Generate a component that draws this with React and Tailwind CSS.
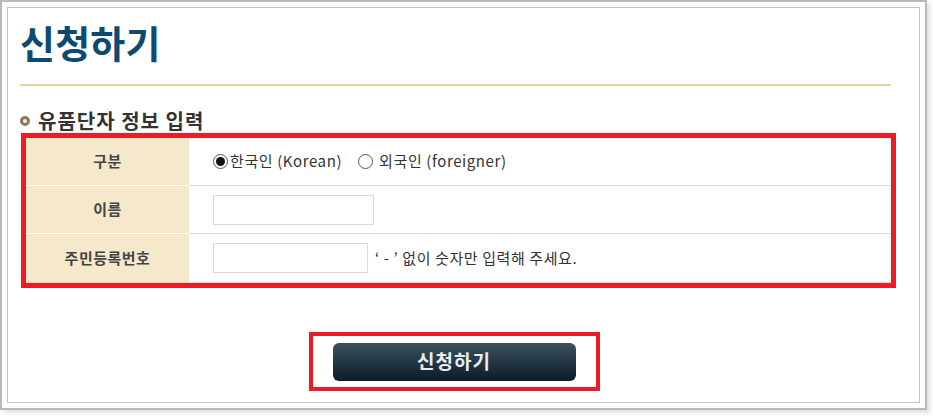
import React from "react";

const font = { fontFamily: '"Noto Sans CJK KR", "Noto Sans", sans-serif' };

function Radio({ checked }) {
  return (
    <span className="inline-flex items-center justify-center w-[15px] h-[15px] rounded-full border border-[#555] bg-white mr-[2px]">
      {checked && <span className="block w-[9px] h-[9px] rounded-full bg-[#111]" />}
    </span>
  );
}

function Row({ label, children, last }) {
  return (
    <div className={`flex h-[48px] ${last ? "" : "border-b border-[#dcdcdc]"}`}>
      <div className={`w-[163px] flex items-center justify-center bg-[#f6e8cb] text-[15px] font-bold text-[#444] tracking-[0.5px] ${last ? "" : "border-b border-white -mb-px"}`}>
        {label}
      </div>
      <div className="flex-1 flex items-center pl-[24px] text-[15px] text-[#333] tracking-[0.6px]">{children}</div>
    </div>
  );
}

export default function App() {
  return (
    <div className="w-[933px] h-[416px] bg-white" style={font}>
      <div className="w-[927px] h-[410px] border-2 border-[#b9b9b9] p-[5px] shadow-[3px_3px_4px_rgba(0,0,0,0.12)]">
        <div className="h-full border border-[#c4c4c4] pl-[12px] pt-[10px]">
          <h1 className="text-[38px] leading-[48px] font-bold text-[#0d4a70] tracking-[0.2px]">신청하기</h1>
          <div className="w-[871px] h-[2px] bg-[#e6d49f] mt-[18px]" />

          <div className="flex items-center gap-[8px] mt-[22px] h-[26px]">
            <span className="w-[10px] h-[10px] rounded-full border-[3px] border-[#8a7a55] bg-[#f4efe2]" />
            <h2 className="text-[20px] leading-[26px] font-bold text-[#333] tracking-[1px]">유품단자 정보 입력</h2>
          </div>

          <div className="w-[875px] ml-px border-[5px] border-[#ed1c24] -mt-[1px]">
            <div className="border-b border-[#dcdcdc]">
              <Row label="구분">
                <label className="flex items-center">
                  <Radio checked />
                  <span>한국인 (Korean)</span>
                </label>
                <label className="flex items-center ml-[16px]">
                  <Radio />
                  <span className="ml-[4px]">외국인 (foreigner)</span>
                </label>
              </Row>
              <Row label="이름">
                <input className="w-[161px] h-[30px] border border-[#d9d9d9] bg-white outline-none" />
              </Row>
              <Row label="주민등록번호" last>
                <input className="w-[155px] h-[30px] border border-[#d9d9d9] bg-white outline-none" />
                <span className="ml-[7px]">‘ - ’ 없이 숫자만 입력해 주세요.</span>
              </Row>
            </div>
          </div>

          <div className="flex justify-center mt-[44px] pr-[31px]">
            <div className="w-[291px] h-[59px] border-[4px] border-[#ed1c24] flex items-center justify-center">
              <button className="w-[243px] h-[38px] rounded-[6px] bg-gradient-to-b from-[#3d5260] to-[#0c1c28] text-[#e8ecef] text-[19px] font-bold tracking-[1px]">
                신청하기
              </button>
            </div>
          </div>
        </div>
      </div>
    </div>
  );
}
